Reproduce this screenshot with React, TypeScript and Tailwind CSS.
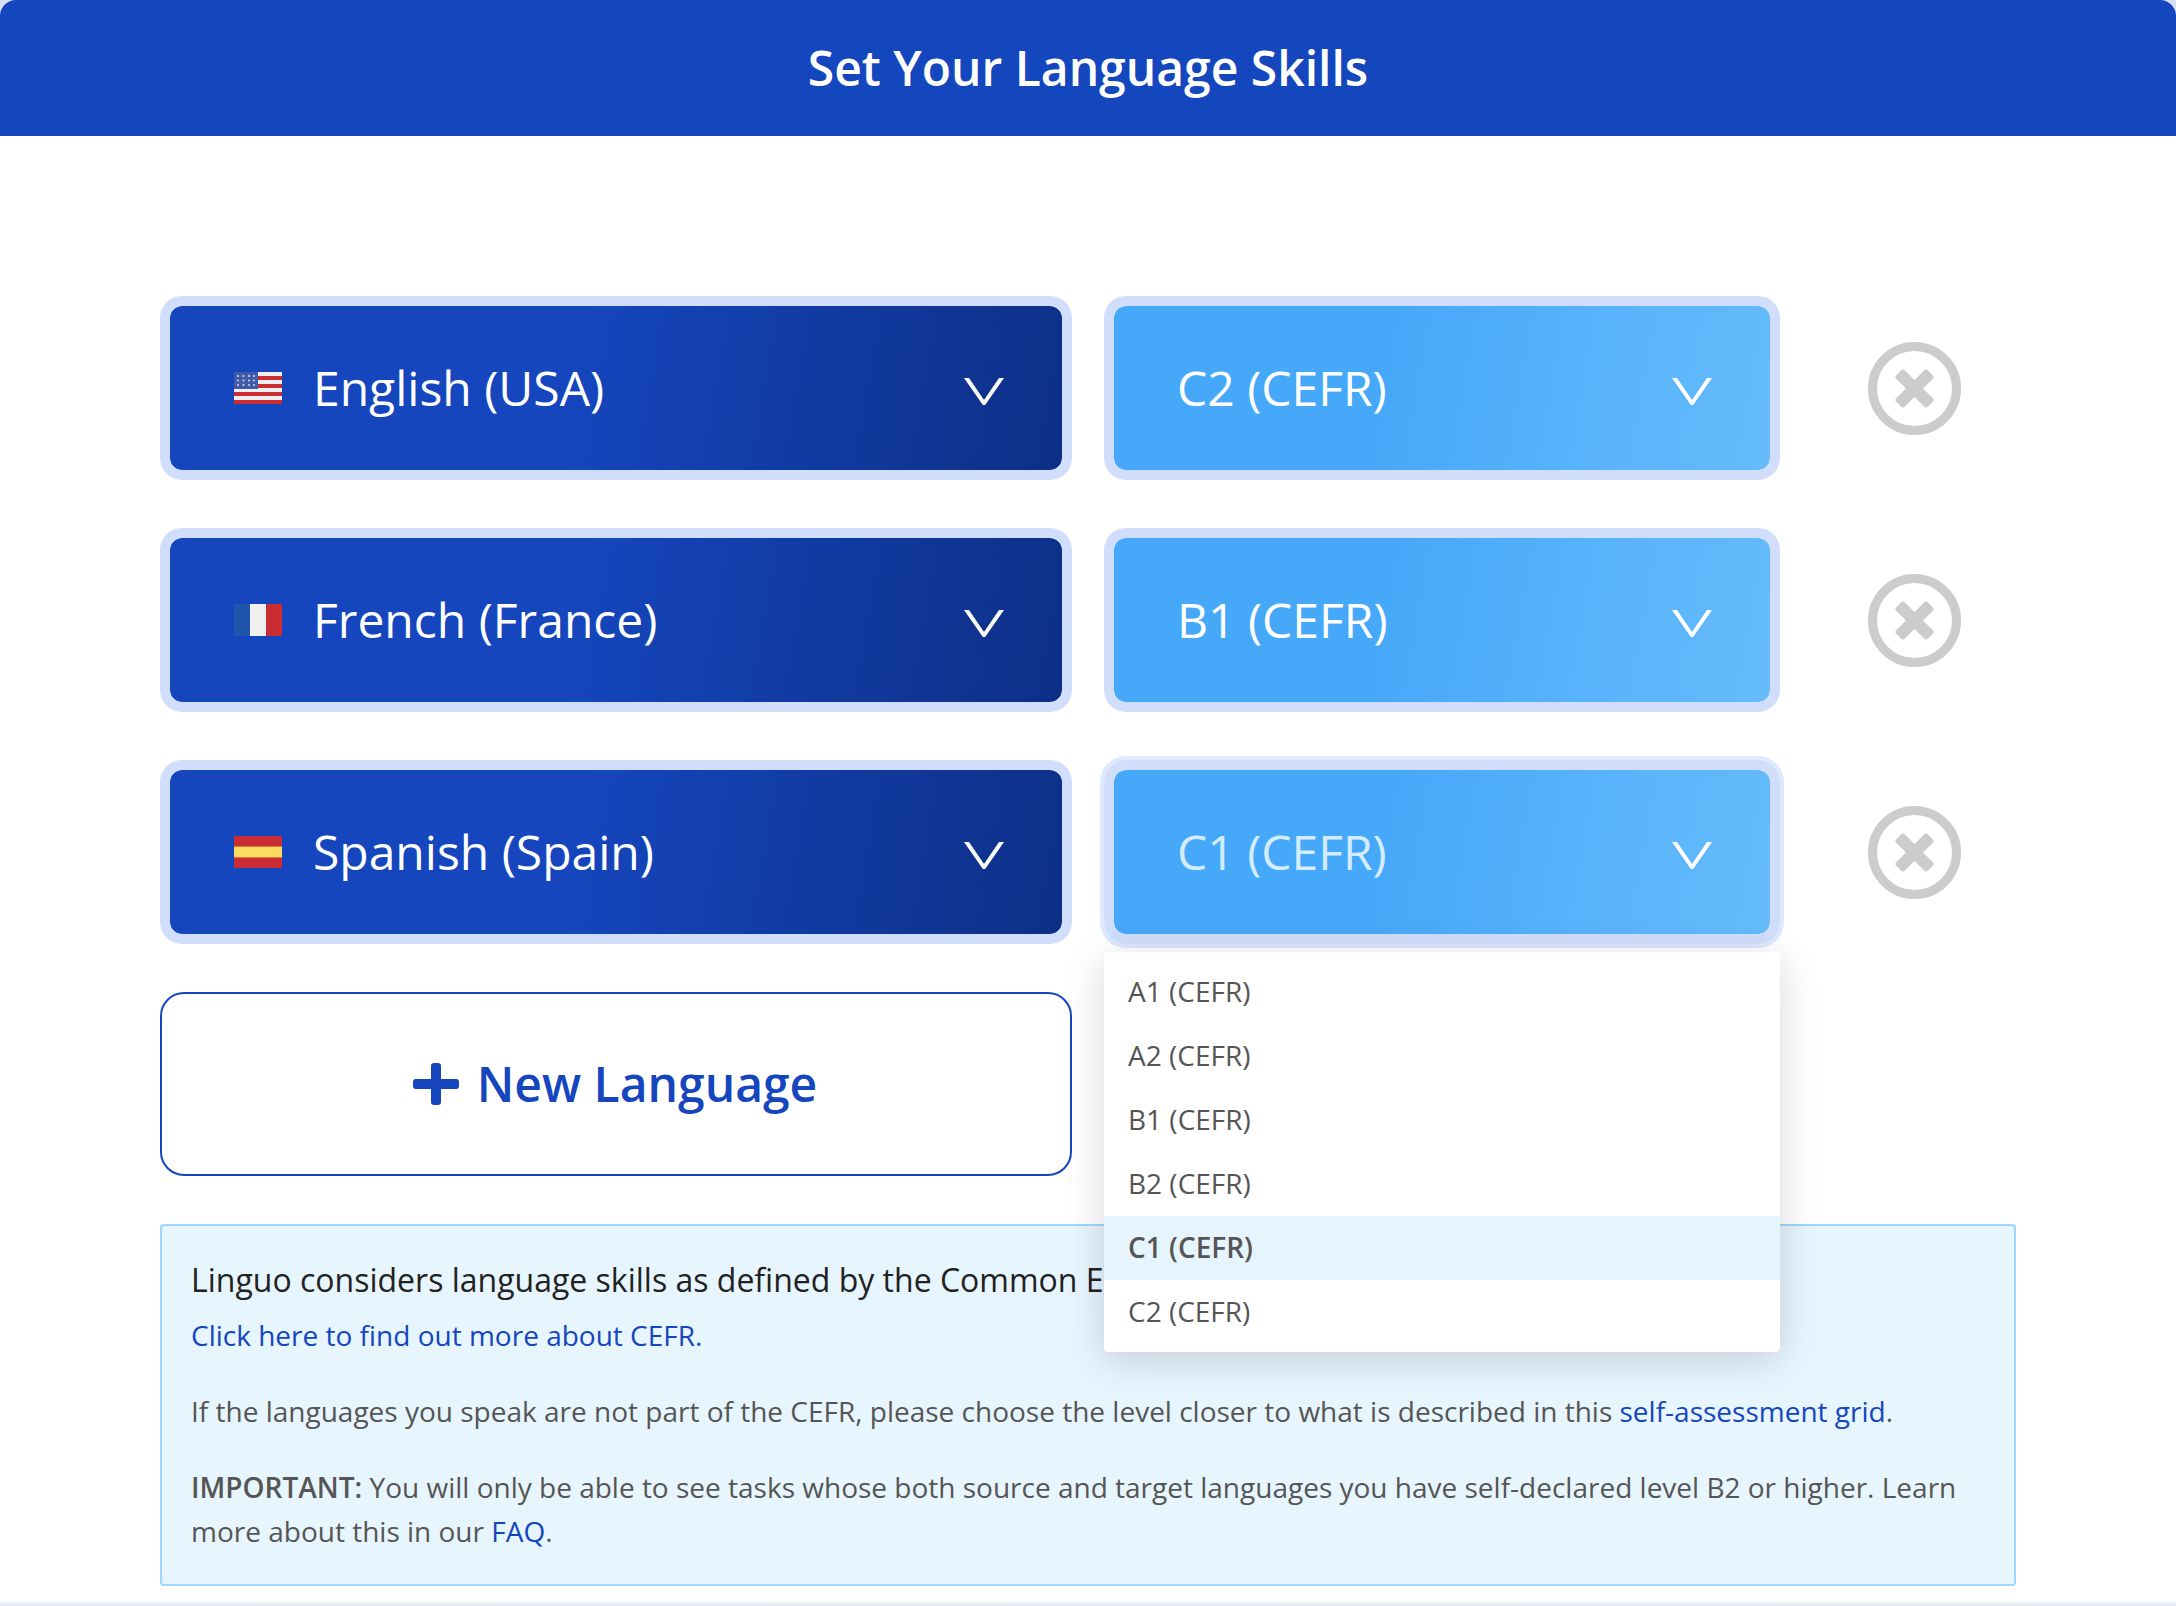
const levels = ['A1 (CEFR)', 'A2 (CEFR)', 'B1 (CEFR)', 'B2 (CEFR)', 'C1 (CEFR)', 'C2 (CEFR)']

function FlagUS() {
  return (
    <svg width="48" height="32" viewBox="0 0 48 32" className="shrink-0">
      <rect width="48" height="32" fill="#f0f0f0" />
      {[4, 12, 20, 28].map(y => <rect key={y} y={y} width="48" height="4" fill="#c92d33" />)}
      <rect width="24" height="17" fill="#3f5ba9" />
      {[4, 8.5, 13].map(y => [4, 9.5, 15, 20].map(x => (
        <circle key={`${x}-${y}`} cx={x} cy={y} r="1" fill="#d5dcf0" />
      )))}
    </svg>
  )
}

function FlagFR() {
  return (
    <svg width="48" height="32" viewBox="0 0 48 32" className="shrink-0">
      <rect width="16" height="32" fill="#1f55aa" />
      <rect x="16" width="16" height="32" fill="#f0f0f0" />
      <rect x="32" width="16" height="32" fill="#c92d33" />
    </svg>
  )
}

function FlagES() {
  return (
    <svg width="48" height="32" viewBox="0 0 48 32" className="shrink-0">
      <rect width="48" height="32" fill="#c92d33" />
      <rect y="10" width="48" height="12" fill="#fcdb63" />
      <rect y="10" width="48" height="1" fill="#d6813c" />
      <rect y="21" width="48" height="1" fill="#d6813c" />
    </svg>
  )
}

function Chevron() {
  return (
    <svg width="40" height="28" viewBox="0 0 40 28" fill="#fff" className="shrink-0 mt-2">
      <path d="M0 0 H5 L20 22 L35 0 H40 L21.5 26.5 Q20 28 18.5 26.5 Z" />
    </svg>
  )
}

function RemoveIcon() {
  return (
    <svg width="93" height="93" viewBox="0 0 93 93" fill="#cccccc">
      <circle cx="46.5" cy="46.5" r="42" fill="none" stroke="#cccccc" strokeWidth="9" />
      <rect x="40.5" y="24.2" width="12" height="44.6" rx="2" transform="rotate(45 46.5 46.5)" />
      <rect x="40.5" y="24.2" width="12" height="44.6" rx="2" transform="rotate(-45 46.5 46.5)" />
    </svg>
  )
}

function LanguageRow({ flag, language, level, open }: { flag: React.ReactNode; language: string; level: string; open?: boolean }) {
  return (
    <div className="flex gap-8 mb-12">
      <button className="w-[912px] h-[184px] shrink-0 border-[10px] border-[#d1defb] rounded-[22px] bg-clip-padding bg-[linear-gradient(100deg,#1546bd_45%,#0d2f86)] flex items-center pl-16 pr-[58px] text-white text-[48px]">
        {flag}
        <span className="ml-[31px] flex-1 text-left">{language}</span>
        <Chevron />
      </button>
      <div className="relative w-[676px] shrink-0">
        <button className={`w-full h-[184px] border-[10px] border-[#d1defb] rounded-[22px] bg-clip-padding bg-[linear-gradient(100deg,#46a8f9_40%,#66bcfb)] flex items-center pl-[63px] pr-[58px] text-[48px] ${open ? 'shadow-[0_0_0_4px_#dce9fe] text-[#d3ecfe]' : 'text-white'}`}>
          <span className="flex-1 text-left">{level}</span>
          <Chevron />
        </button>
        {open && (
          <div className="absolute z-10 top-[192px] left-0 w-full bg-white rounded-[4px] py-2 shadow-[0_8px_40px_rgba(0,0,0,0.16)]">
            {levels.map(l => (
              <div key={l} className={`h-16 flex items-center pl-6 pb-0.5 text-[28px] text-[#555] ${l === level ? 'bg-[#e6f4fd] font-semibold' : ''}`}>
                {l}
              </div>
            ))}
          </div>
        )}
      </div>
      <div className="flex-1 flex items-center justify-center">
        <RemoveIcon />
      </div>
    </div>
  )
}

export default function App() {
  return (
    <div className="h-[1606px] flex flex-col overflow-hidden bg-white font-['Open_Sans',sans-serif]">
      <div className="shrink-0 bg-[#d5def3]">
        <header className="h-[136px] flex items-center justify-center rounded-t-2xl bg-[#1446bd] text-white text-[48px] font-semibold">
          Set Your Language Skills
        </header>
      </div>

      <main className="flex-1 px-40 pt-40">
        <LanguageRow flag={<FlagUS />} language="English (USA)" level="C2 (CEFR)" />
        <LanguageRow flag={<FlagFR />} language="French (France)" level="B1 (CEFR)" />
        <LanguageRow flag={<FlagES />} language="Spanish (Spain)" level="C1 (CEFR)" open />

        <button className="w-[912px] h-[184px] mb-12 border-2 border-[#1546bd] rounded-3xl flex items-center justify-center gap-[18px] pr-[2px] text-[#1546bd] text-[48px] font-semibold">
          <svg width="46" height="42" viewBox="0 0 46 42" fill="#1546bd">
            <rect x="18" width="10" height="42" rx="3" />
            <rect y="16" width="46" height="10" rx="3" />
          </svg>
          New Language
        </button>

        <div className="h-[362px] border-2 border-[#a0d6fb] rounded-[4px] bg-[#e7f5fe] px-[29px] pt-[32px] text-[#555] text-[28px] leading-[44px]">
          <p className="text-[#222] text-[32px] whitespace-nowrap">Linguo considers language skills as defined by the Common European Framework of Reference (CEFR).</p>
          <a className="block mt-[11px] text-[#1546bd]">Click here to find out more about CEFR.</a>
          <p className="mt-[32px]">
            If the languages you speak are not part of the CEFR, please choose the level closer to what is described in this <a className="text-[#1546bd]">self-assessment grid</a>.
          </p>
          <p className="mt-[32px]">
            <strong className="font-semibold">IMPORTANT:</strong> You will only be able to see tasks whose both source and target languages you have self-declared level B2 or higher. Learn more about this in our <a className="text-[#1546bd]">FAQ</a>.
          </p>
        </div>
      </main>

      <div className="h-[6px] shrink-0 bg-gradient-to-b from-white to-[#e2e6f4]" />
    </div>
  )
}
